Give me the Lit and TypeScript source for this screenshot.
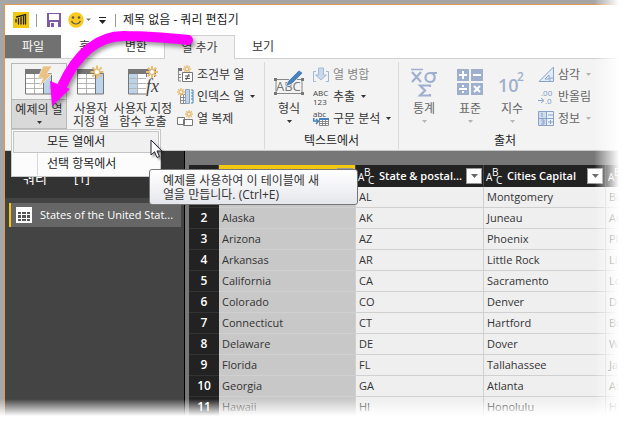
import { LitElement, html, css, svg, nothing } from "lit";
import { customElement } from "lit/decorators.js";
import { classMap } from "lit/directives/class-map.js";

const rows: [string, string, string, string][] = [
  ["", "AL", "Montgomery", "Birmingham"],
  ["Alaska", "AK", "Juneau", "Anchorage"],
  ["Arizona", "AZ", "Phoenix", "Phoenix"],
  ["Arkansas", "AR", "Little Rock", "Little Rock"],
  ["California", "CA", "Sacramento", "Los Angeles"],
  ["Colorado", "CO", "Denver", "Denver"],
  ["Connecticut", "CT", "Hartford", "Bridgeport"],
  ["Delaware", "DE", "Dover", "Wilmington"],
  ["Florida", "FL", "Tallahassee", "Jacksonville"],
  ["Georgia", "GA", "Atlanta", "Atlanta"],
  ["Hawaii", "HI", "Honolulu", "Honolulu"],
];

const star = (x: number, y: number, r = 7) => svg`
  <g stroke="#e8bd79" stroke-width=${r > 5 ? 2 : 1.4} fill="none">
    ${[0, 45, 90, 135, 180, 225, 270, 315].map((a) => svg`
      <path d="M${x} ${y - r / 2.2}V${y - r}" transform="rotate(${a} ${x} ${y})"/>`)}
    <circle cx=${x} cy=${y} r=${r / 2.4} fill="#fff" stroke-width="1.2"/>
  </g>`;

const sheet = (blueLeft = false) => svg`
  <path d="M1 4h26v21H1z" fill="#fff"/>
  <path d=${blueLeft ? "M1 4h8v21H1z" : "M18 4h9v21h-9z"} fill="#bcd3ea"/>
  <path d="M1 9.5h17M1 14.5h17M1 19.5h17M9.5 4v21" stroke="#b5b5b5"/>
  <path d="M.5 4.500h26v20.500H.5zM18.500 4v21" fill="none" stroke="#777"/>
  <path d="M0 0h${blueLeft ? 28 : 19}v5H0z" fill="#777"/>`;

const big = {
  example: svg`<svg width="28" height="27" viewBox="0 0 28 27">${sheet()}
    <path d="M18-3h9l-5 8h5L14 18l4-9h-5z" fill="#ecc182" stroke="#f3f3f3" stroke-width=".7"/></svg>`,
  custom: svg`<svg width="28" height="27" viewBox="0 0 28 27">${sheet()}${star(20, 3, 6.500)}</svg>`,
  invoke: svg`<svg width="30" height="27" viewBox="0 0 30 27">${sheet(true)}
    <path d="M18 8h12v19H18z" fill="#f3f3f3"/>${star(24, 3, 6)}
    <text x="18" y="23" class="fx">fx</text></svg>`,
  format: svg`<svg width="32" height="28" viewBox="0 0 32 28">
    <path d="M3 10.500h26v14H3z" fill="none" stroke="#888"/>
    <text x="3" y="22" class="abc">ABC</text>
    <path d="M12 18l3-6L26 1l4 3-11 11z" fill="#4a83bb" stroke="#f3f3f3" stroke-width=".8"/>
    <path d="M1 9h3v3H1zM28 9h3v3h-3zM1 23h3v3H1zM28 23h3v3h-3z" fill="#777"/></svg>`,
  stats: svg`<svg width="28" height="30" viewBox="0 0 28 30">
    <path d="M1 .500h12" stroke="#9fb0ce" stroke-width="1.500"/>
    <path d="M2 3l9 10M11 3L2 13M27 4h-7c-6 0-6 9 0 9 6 0 6-8 1-9M20 18v-1.500h-10l5 5-5 5h10V25" fill="none" stroke="#9fb0ce" stroke-width="2.200"/></svg>`,
  standard: svg`<svg width="26" height="26" viewBox="0 0 26 26">
    <path d="M0 0h12v12H0zM14 0h12v12H14zM0 14h12v12H0zM14 14h12v12H14z" fill="#9fb0ce"/>
    <path d="M2 6h8M6 2v8M16 6h8M2 20h8M5 17h2M5 23h2M17 17l6 6M23 17l-6 6" stroke="#fff" stroke-width="2"/></svg>`,
  power: svg`<svg width="28" height="30" viewBox="0 0 28 30"><text x="0" y="23" class="ten">10</text><text x="19" y="12" class="two">2</text></svg>`,
};

const small = {
  conditional: svg`<svg width="17" height="17" viewBox="0 0 17 17">
    <path d="M1 2h4v3H1z" fill="#777"/><path d="M1.500 5v10H4M1 8.500h3M1 11.500h3" stroke="#888" fill="none"/>
    ${star(10, 3, 4)}<path d="M5.500 6.500h10v9h-10z" fill="#fff" stroke="#777"/>
    <path d="M8 10h5M8 12.500h5M12 8l-3 6" stroke="#555"/></svg>`,
  index: svg`<svg width="17" height="17" viewBox="0 0 17 17">
    <path d="M3.500 6.500h6v9h-6zM3 9.500h7M3 12.500h7M6.500 6v10" fill="#fff" stroke="#888"/>
    <path d="M8.500 1.500h4v14h-4z" fill="#bcd3ea" stroke="#8aa2bd"/>${star(4, 4, 4)}
    <path d="M14 2h2v13M14 5h2M14 8h2M14 11h2M14 15h2" stroke="#4a83bb" fill="none"/></svg>`,
  copy: svg`<svg width="17" height="17" viewBox="0 0 17 17">
    <path d="M.5 7.500h7v7h-7zM6.500 9.500h9v6h-9z" fill="#fff" stroke="#777"/>${star(12, 4, 4)}</svg>`,
  merge: svg`<svg width="17" height="17" viewBox="0 0 17 17">
    <path d="M5.500 2h5v7h3L8 14 2.500 9h3z" fill="#cbd8ea" stroke="#a4bbd8"/><path d="M3 5.500H.500v10H3M13 5.500h2.500v10H13" fill="none" stroke="#9fb6d6"/></svg>`,
  extract: svg`<svg width="17" height="17" viewBox="0 0 17 17"><text x="0" y="8" class="tiny">ABC</text><text x="0" y="17" class="tiny">123</text></svg>`,
  parse: svg`<svg width="17" height="17" viewBox="0 0 17 17"><text x="0" y="7" class="tiny">abc</text>
    <path d="M6.500 8.500h9v7h-9zM6 11.500h10M6 13.500h10M9.500 8v8M12.500 8v8" fill="#fff" stroke="#888"/><path d="M6 8h10v2H6z" fill="#4a83bb"/>
    <path d="M.700 8v3h5M3 9l2.500 2L3 14" fill="none" stroke="#4a83bb" stroke-width="1.500"/></svg>`,
  trig: svg`<svg width="17" height="17" viewBox="0 0 17 17"><path d="M1 15.500L15.500 1v14.500zM7 13l4-4v4zM12 15v-3h3" fill="#e2ecf8" stroke="#8ba3c9" fill-rule="evenodd"/></svg>`,
  round: svg`<svg width="17" height="17" viewBox="0 0 17 17"><text x="3" y="8" class="tiny blue">.00</text><text x="7" y="16" class="tiny blue">.0</text><path d="M0 12.500h5M3 10l3 2.500L3 15" fill="none" stroke="#8ba3c9"/></svg>`,
  info: svg`<svg width="17" height="17" viewBox="0 0 17 17"><path d="M.5 1.500h15v14H.500z" fill="#e8f0fa" stroke="#8ba3c9"/><path d="M1 2h7v13H1z" fill="#cfdcec"/><path d="M8.500 2v13M1 8.500h15M10 5h5M10 12h5M12.500 10v4M3 4l1-1v4M3 10h3v4H3M4 12h2" fill="none" stroke="#8ba3c9"/></svg>`,
};

const caret = (muted = false) =>
  svg`<svg class="caret" width="5" height="3" viewBox="0 0 5 3"><path d="M0 0h5L2.500 3z" fill=${muted ? "#b4b4b4" : "#333"}/></svg>`;

@customElement("ribbon-button")
class RibbonButton extends LitElement {
  static properties = {
    label: {}, icon: {}, size: {}, menu: { type: Boolean }, muted: { type: Boolean },
    open: { type: Boolean }, dim: { type: Boolean },
  };
  declare label: string;
  declare icon: string;
  declare size: string;
  declare menu: boolean;
  declare muted: boolean;
  declare open: boolean;
  declare dim: boolean;

  static styles = css`
    :host { display: block; }
    button {
      border: 0; margin: 0; padding: 0; background: none; color: #333;
      font: 12px/13px "Open Sans", "Noto Sans CJK KR", sans-serif; white-space: pre;
    }
    svg { overflow: visible; flex: none; }
    .big { display: flex; flex-direction: column; align-items: center; width: 100%; padding-top: 6px; height: 66px; }
    .big .art { height: 30px; }
    .big .text { display: flex; flex-direction: column; align-items: center; flex: 1; gap: 5px; width: 100%; padding-top: 3px; }
    .big.open { border: 1px solid #b8b8b8; padding-top: 5px; }
    .big.open .text { background: #d9d9d9; border-top: 1px solid #b8b8b8; }
    .small { display: flex; align-items: center; gap: 3px; height: 22px; }
    .small .caret { margin-left: 3px; }
    .muted { color: #666; }
    .dim { color: #888; }
    .fx { font: italic 18px "Liberation Serif", serif; fill: #444; }
    .abc { font: 13px "Open Sans", sans-serif; fill: #777; }
    .ten { font: 600 18px "Open Sans", sans-serif; fill: #9fb0ce; }
    .two { font: 600 12px "Open Sans", sans-serif; fill: #9fb0ce; }
    .tiny { font: 8px "Open Sans", sans-serif; fill: #444; }
    .blue { fill: #7f98c1; }
  `;

  render() {
    const tone = { muted: this.muted, dim: this.dim };
    if (this.size === "big") {
      return html`<button class=${classMap({ big: true, open: this.open, ...tone })}>
        <span class="art">${big[this.icon as keyof typeof big]}</span>
        <span class="text"><span>${this.label}</span>${this.menu ? caret(this.muted) : nothing}</span>
      </button>`;
    }
    return html`<button class=${classMap({ small: true, ...tone })}>
      ${small[this.icon as keyof typeof small]}<span>${this.label}</span>${this.menu ? caret(this.muted) : nothing}
    </button>`;
  }
}

const typeIcon = html`<svg class="type" width="17" height="20" viewBox="0 0 17 20" aria-hidden="true">
  <text x="0" y="15">A</text><text x="6" y="10">B</text><text x="10" y="18">C</text></svg>`;

@customElement("data-grid")
class DataGrid extends LitElement {
  static styles = css`
    :host { display: block; }
    table { border-collapse: separate; border-spacing: 0; table-layout: fixed; width: 100%; min-width: 460px; }
    .c0 { width: 30px; }
    .c1 { width: 137px; }
    .c2 { width: 128px; }
    .c3 { width: 122px; }
    th, td { box-sizing: border-box; padding: 0; white-space: nowrap; text-align: left; }
    thead th { height: 22px; background: #222; color: #fff; font-size: 11px; font-weight: 600; border-right: 1px solid #444; }
    thead .picked { background: #f2c811; color: #222; }
    .head { display: flex; align-items: center; gap: 4px; padding: 0 2px; }
    .name { flex: 1; }
    .type { flex: none; display: block; }
    .type text { font: 10px "Open Sans", sans-serif; fill: currentColor; }
    .filter { display: flex; align-items: center; justify-content: center; box-sizing: border-box; width: 16px; height: 16px; padding: 0; flex: none; border: 1px solid #999; background: #fff; }
    td { height: 21px; padding-left: 3px; background: #efefef; border-right: 1px solid #d0d0d0; border-bottom: 1px solid #d0d0d0; color: #333; font-size: 11px; }
    .state { background: #c8c8c8; }
    tbody th { background: #222; color: #fff; text-align: center; border-bottom: 1px solid #333; font-weight: 600; }
  `;

  private heading(name: string, picked = false) {
    return html`<th scope="col" class=${classMap({ picked })}><div class="head">${picked ? nothing : typeIcon}<span class="name">${name}</span>
      <button class="filter"><svg width="7" height="4" viewBox="0 0 7 4"><path d="M0 0h7L3.500 4z" fill="#666"/></svg></button></div></th>`;
  }

  render() {
    return html`<table>
      <colgroup><col class="c0"><col class="c1"><col class="c2"><col class="c3"><col></colgroup>
      <thead><tr><th></th>${this.heading("", true)}${this.heading("State & postal...")}${this.heading("Cities Capital")}${this.heading("")}</tr></thead>
      <tbody>${rows.map((r, i) => html`<tr><th scope="row">${i ? i + 1 : nothing}</th><td class="state">${r[0]}</td><td>${r[1]}</td><td>${r[2]}</td><td>${r[3]}</td></tr>`)}</tbody>
    </table>`;
  }
}

@customElement("app-root")
class AppRoot extends LitElement {
  static styles = css`
    :host { display: block; position: relative; overflow: hidden; height: 100vh; background: #a6a6a6; font: 12px/16px "Open Sans", "Noto Sans CJK KR", sans-serif; color: #333; }
    button { font: inherit; color: inherit; border: 0; padding: 0; margin: 0; background: none; }
    svg { flex: none; }
    .window { display: flex; flex-direction: column; min-height: 100%; box-sizing: border-box; margin: 4px 0 0 4px; border: solid #dd9a55; border-width: 1px 0 0 1px; background: #fff; }
    .title { display: flex; align-items: center; height: 30px; padding-left: 8px; }
    .title button { display: flex; }
    .bar { width: 1px; height: 13px; background: #999; }
    .logo { margin-right: 7px; }
    .save { margin: 0 7px 0 10px; }
    .more { margin: 0 9px 0 8px; }
    .name { margin-left: 7px; color: #222; }
    .tabs { display: flex; height: 23px; border-bottom: 1px solid #d0d0d0; }
    .tabs button { width: 56px; height: 23px; }
    .tabs .file { background: #717171; color: #fff; }
    .tabs .home { width: 47px; }
    .tabs .on { width: 71px; height: 24px; box-sizing: border-box; border: 1px solid #d0d0d0; border-bottom: 0; background: #f3f3f3; color: #444; }
    .ribbon { display: flex; height: 91px; background: #f3f3f3; border-bottom: 1px solid #c8c8c8; }
    .group { display: flex; flex-direction: column; justify-content: space-between; box-sizing: border-box; margin: 3px 0 1px; border-right: 1px solid #dadada; }
    .group:last-child { border: 0; }
    .tools { display: flex; padding-top: 1px; }
    .caption { text-align: center; color: #222; }
    .make { width: 260px; padding-left: 6px; }
    .text { width: 134px; }
    .source { width: 212px; }
    .w48 { width: 48px; }
    .w56 { width: 56px; }
    .w42 { width: 42px; }
    .w50 { width: 50px; }
    .make .list { margin-left: 6px; }
    .source .list { margin-left: 5px; }
    .body { display: flex; flex: 1; }
    .queries { width: 179px; flex: none; background: #444; border-right: 1px solid #000; }
    .queries h2 { margin: 0; height: 47px; box-sizing: border-box; padding: 17px 0 0 18px; background: #333; color: #fff; font-size: 13px; line-height: 20px; font-weight: 400; display: flex; gap: 27px; }
    .query { display: flex; align-items: center; gap: 8px; box-sizing: border-box; width: 172px; height: 24px; margin: 5px 0 0 4px; padding-left: 5px; border-left: 2px solid #f2c811; background: #666; color: #fff; font-size: 11px; white-space: nowrap; }
    .grid { flex: 1; min-width: 0; padding: 14px 0 0 4px; background: #777; overflow: hidden; }
    .menu { position: absolute; left: 11px; top: 129px; width: 150px; height: 48px; box-sizing: border-box; padding: 1px; border: 1px solid #c8c8c8; background: #fcfcfc; }
    .menu button { display: block; box-sizing: border-box; width: 100%; height: 22px; padding-left: 34px; text-align: left; color: #222; }
    .menu .hot { border: 1px solid #c4c4c4; padding-left: 33px; background: #f0f0f0; }
    .menu .cold { background: linear-gradient(#d8d8d8, #d8d8d8) 24px 0 / 1px 100% no-repeat; }
    .tip { position: absolute; left: 149px; top: 169px; width: 209px; box-sizing: border-box; padding: 4px 13px 2px; border: 1px solid #767676; border-radius: 3px; background: linear-gradient(#fff, #e6e7ec); color: #333; line-height: 14px; white-space: pre; }
    .cursor, .arrow { position: absolute; pointer-events: none; }
    .cursor { left: 150px; top: 139px; filter: drop-shadow(2px 2px 1px rgba(0, 0, 0, .4)); }
    .arrow { left: 0; top: 0; filter: drop-shadow(2px 3px 2px rgba(0, 0, 0, .4)); }
    .fade-right { position: absolute; inset: 0 0 0 auto; width: 32px; background: linear-gradient(90deg, transparent, #fff 25px); pointer-events: none; }
    .fade-bottom { position: absolute; inset: auto 0 0 0; height: 22px; background: linear-gradient(transparent, #fff 17px); pointer-events: none; }
  `;

  render() {
    return html`
      <div class="window">
        <header class="title">
          <svg class="logo" width="16" height="16" viewBox="0 0 16 16"><path d="M0 0h16v16H0z" fill="#f2c811"/><path d="M3 10V7.500M5.500 12V6.500M8 12V5.500M10.500 12V4.500M3.500 5l9-2.500V12" fill="none" stroke="#222" stroke-width="1.300" stroke-linecap="round"/></svg>
          <i class="bar"></i>
          <button class="save" aria-label="저장"><svg width="14" height="14" viewBox="0 0 14 14"><path d="M0 0h14v14H0z" fill="#8157a8"/><path d="M2 1h10v6H2zM3 9h8v5H3z" fill="#fff"/><path d="M4 10h3v4H4z" fill="#8157a8"/></svg></button>
          <button aria-label="의견"><svg width="23" height="16" viewBox="0 0 23 16"><circle cx="8" cy="8" r="7.700" fill="#fbc91d"/><circle cx="5" cy="5.500" r="1.200" fill="#555"/><circle cx="11" cy="5.500" r="1.200" fill="#555"/><path d="M3.500 9c2 4 7 4 9 0" fill="none" stroke="#555" stroke-width="1.200"/><path d="M18 6.500h5L20.500 9z" fill="#777"/></svg></button>
          <button class="more" aria-label="사용자 지정"><svg width="7" height="7" viewBox="0 0 7 7"><path d="M0 0h7v1H0zM0 3h7L3.500 7z" fill="#222"/></svg></button>
          <i class="bar"></i>
          <span class="name">제목 없음 - 쿼리 편집기</span>
        </header>
        <nav class="tabs">
          <button class="file">파일</button><button class="home">홈</button><button>변환</button><button class="on">열 추가</button><button>보기</button>
        </nav>
        <section class="ribbon">
          <div class="group make"><div class="tools">
            <ribbon-button class="w56" size="big" icon="example" label="예제의 열" menu open></ribbon-button>
            <ribbon-button class="w48" size="big" icon="custom" .label=${"사용자\n지정 열"}></ribbon-button>
            <ribbon-button class="w56" size="big" icon="invoke" .label=${"사용자 지정\n함수 호출"}></ribbon-button>
            <div class="list">
              <ribbon-button icon="conditional" label="조건부 열"></ribbon-button>
              <ribbon-button icon="index" label="인덱스 열" menu></ribbon-button>
              <ribbon-button icon="copy" label="열 복제"></ribbon-button>
            </div></div></div>
          <div class="group text"><div class="tools">
            <ribbon-button class="w48" size="big" icon="format" label="형식" menu></ribbon-button>
            <div class="list">
              <ribbon-button icon="merge" label="열 병합" dim></ribbon-button>
              <ribbon-button icon="extract" label="추출" menu></ribbon-button>
              <ribbon-button icon="parse" label="구문 분석" menu></ribbon-button>
            </div></div><div class="caption">텍스트에서</div></div>
          <div class="group source"><div class="tools">
            <ribbon-button class="w50" size="big" icon="stats" label="통계" menu muted></ribbon-button>
            <ribbon-button class="w42" size="big" icon="standard" label="표준" menu muted></ribbon-button>
            <ribbon-button class="w42" size="big" icon="power" label="지수" menu muted></ribbon-button>
            <div class="list">
              <ribbon-button icon="trig" label="삼각" menu muted></ribbon-button>
              <ribbon-button icon="round" label="반올림" muted></ribbon-button>
              <ribbon-button icon="info" label="정보" menu muted></ribbon-button>
            </div></div><div class="caption">출처</div></div>
        </section>
        <main class="body">
          <aside class="queries">
            <h2><span>쿼리</span><span>[1]</span></h2>
            <button class="query"><svg width="16" height="16" viewBox="0 0 16 16"><path d="M0 0h16v16H0z" fill="#fff"/><path d="M2 5h3v2H2zM6 5h4v2H6zM11 5h3v2h-3zM2 8h3v3H2zM6 8h4v3H6zM11 8h3v3h-3zM2 12h3v2H2zM6 12h4v2H6zM11 12h3v2h-3z" fill="#555"/></svg>States of the United Stat...</button>
          </aside>
          <div class="grid"><data-grid></data-grid></div>
        </main>
      </div>
      <div class="menu" role="menu"><button class="hot" role="menuitem">모든 열에서</button><button class="cold" role="menuitem">선택 항목에서</button></div>
      <div class="tip" role="tooltip">예제를 사용하여 이 테이블에 새\n열을 만듭니다. (Ctrl+E)</div>
      <svg class="cursor" width="13" height="20" viewBox="0 0 13 20"><path d="M1 1v15l3.500-3.300L7 18.500l2.500-1L7 12h4.800z" fill="#fff" stroke="#223" /></svg>
      <svg class="arrow" width="200" height="112" viewBox="0 0 200 112"><path d="M189 40C168 38 146 36 126 36C98 35 77 54 62 86" fill="none" stroke="#f0f" stroke-width="10"/><circle cx="188" cy="40" r="5" fill="#f0f"/><path d="M50 81l20 8-18 17z" fill="#f0f"/></svg>
      <div class="fade-right"></div><div class="fade-bottom"></div>`;
  }
}
